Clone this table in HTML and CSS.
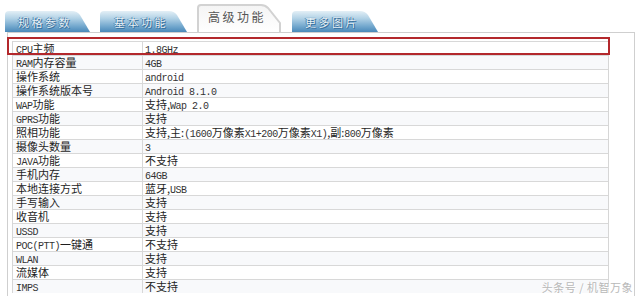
FILE: index.html
```html
<!DOCTYPE html>
<html lang="zh-CN">
<head>
<meta charset="utf-8">
<title>高级功能</title>
<link rel="stylesheet" href="styles.css">
</head>
<body>
<div class="page">
  <div class="tabs">
    <div class="tab tab-a">
      <svg class="tab-bg" width="85" height="22" viewBox="0 0 85 22"><defs><linearGradient id="g1" x1="0" y1="0" x2="0" y2="1"><stop offset="0" stop-color="#e3eff6"/><stop offset="0.35" stop-color="#b2d2e6"/><stop offset="0.75" stop-color="#6fa5cc"/><stop offset="1" stop-color="#4a89b9"/></linearGradient></defs><path d="M0,22 V5 Q0,1 4,1 H67 Q72,1 75,5 L85,22 Z" fill="url(#g1)"/></svg>
      <span class="tab-label">规格参数</span>
    </div>
    <div class="tab tab-b">
      <svg class="tab-bg" width="87" height="22" viewBox="0 0 87 22"><path d="M0,22 V5 Q0,1 4,1 H69 Q74,1 77,5 L87,22 Z" fill="url(#g1)"/></svg>
      <span class="tab-label">基本功能</span>
    </div>
    <div class="tab tab-active">
      <svg class="tab-bg" width="85" height="28" viewBox="0 0 85 28"><defs><linearGradient id="g2" x1="0" y1="0" x2="0" y2="1"><stop offset="0" stop-color="#f4f4f4"/><stop offset="1" stop-color="#ffffff"/></linearGradient></defs><path d="M1,28 V4 Q1,1 4,1 H64 Q68,1 71,4 L83,19 V28" fill="url(#g2)" stroke="#d2d2d2" stroke-width="2"/></svg>
      <span class="tab-label">高级功能</span>
    </div>
    <div class="tab tab-d">
      <svg class="tab-bg" width="86" height="22" viewBox="0 0 86 22"><path d="M0,22 V5 Q0,1 4,1 H68 Q73,1 76,5 L86,22 Z" fill="url(#g1)"/></svg>
      <span class="tab-label">更多图片</span>
    </div>
  </div>
  <div class="panel">
    <div class="spec">
      <div class="row"><div class="k"><span class="en">CPU</span>主频</div><div class="v"><span class="en">1.8GHz</span></div></div>
      <div class="row"><div class="k"><span class="en">RAM</span>内存容量</div><div class="v"><span class="en">4GB</span></div></div>
      <div class="row"><div class="k">操作系统</div><div class="v"><span class="en">android</span></div></div>
      <div class="row"><div class="k">操作系统版本号</div><div class="v"><span class="en">Android 8.1.0</span></div></div>
      <div class="row"><div class="k"><span class="en">WAP</span>功能</div><div class="v">支持,<span class="en">Wap 2.0</span></div></div>
      <div class="row"><div class="k"><span class="en">GPRS</span>功能</div><div class="v">支持</div></div>
      <div class="row"><div class="k">照相功能</div><div class="v">支持,主:<span class="en">(1600</span>万像素<span class="en">X1+200</span>万像素<span class="en">X1)</span>,副:<span class="en">800</span>万像素</div></div>
      <div class="row"><div class="k">摄像头数量</div><div class="v"><span class="en">3</span></div></div>
      <div class="row"><div class="k"><span class="en">JAVA</span>功能</div><div class="v">不支持</div></div>
      <div class="row"><div class="k">手机内存</div><div class="v"><span class="en">64GB</span></div></div>
      <div class="row"><div class="k">本地连接方式</div><div class="v">蓝牙,<span class="en">USB</span></div></div>
      <div class="row"><div class="k">手写输入</div><div class="v">支持</div></div>
      <div class="row"><div class="k">收音机</div><div class="v">支持</div></div>
      <div class="row"><div class="k"><span class="en">USSD</span></div><div class="v">支持</div></div>
      <div class="row"><div class="k"><span class="en">POC(PTT)</span>一键通</div><div class="v">不支持</div></div>
      <div class="row"><div class="k"><span class="en">WLAN</span></div><div class="v">支持</div></div>
      <div class="row"><div class="k">流媒体</div><div class="v">支持</div></div>
      <div class="row"><div class="k"><span class="en">IMPS</span></div><div class="v">不支持</div></div>
    </div>
  </div>
  <div class="highlight"></div>
  <div class="watermark">头条号 / 机智万象</div>
</div>
</body>
</html>
```
FILE: styles.css
```css
html, body {
  margin: 0;
  padding: 0;
  background: #ffffff;
}
body {
  width: 640px;
  height: 296px;
  overflow: hidden;
  font-family: "Noto Sans CJK SC", "Liberation Sans", sans-serif;
  color: #222;
}
.page {
  position: relative;
  width: 640px;
  height: 296px;
  overflow: hidden;
}
.tabs {
  display: flex;
  align-items: flex-end;
  gap: 10px;
  height: 32px;
  padding-left: 5px;
  box-sizing: border-box;
}
.tab {
  display: grid;
  align-items: center;
}
.tab > * {
  grid-area: 1 / 1;
}
.tab-bg {
  display: block;
}
.tab-label {
  font-size: 11px;
  line-height: 12px;
  letter-spacing: 2.5px;
  color: #e9f3f9;
  padding-left: 13px;
  padding-top: 2px;
  text-shadow: 0 0 1px #1f5a88, 1px 1px 0 #3a72a0, -1px 0 0 #5b8fb9;
}
.tab-a { width: 85px; }
.tab-b { width: 87px; }
.tab-d { width: 86px; }
.tab-b .tab-label { padding-left: 14px; }
.tab-d .tab-label { padding-left: 13px; }
.tab-active {
  width: 85px;
}
.tab-active .tab-label {
  color: #555;
  font-size: 12px;
  letter-spacing: 2.5px;
  text-shadow: none;
  padding-left: 11px;
  padding-top: 0;
  align-self: start;
  margin-top: 7px;
}
.panel {
  margin-left: 7px;
  width: 628px;
  height: 264px;
  box-sizing: border-box;
  border: 1px solid #cfcfcf;
  border-bottom: none;
  padding: 8px 0 0 4px;
}
.spec {
  width: 597px;
  box-sizing: border-box;
  border-left: 1px solid #d6d6d6;
  border-right: 1px solid #d6d6d6;
}
.row {
  display: grid;
  grid-template-columns: 130px 1fr;
  height: 14px;
  box-sizing: border-box;
  border-top: 1px solid #d8d8d8;
}
.row:nth-child(even) {
  background: #f8f9fb;
}
.k, .v {
  height: 13px;
  font-size: 11px;
  line-height: 13px;
  white-space: nowrap;
  color: #1e1e1e;
}
.k {
  padding-left: 3px;
  border-right: 1px solid #d8d8d8;
}
.v {
  padding-left: 2px;
}
.en {
  font-family: "Liberation Mono", "DejaVu Sans Mono", monospace;
  font-size: 10px;
  line-height: 10px;
  letter-spacing: -0.5px;
  color: #333;
}
.highlight {
  position: absolute;
  left: 7px;
  top: 37px;
  width: 603px;
  height: 18px;
  box-sizing: border-box;
  border: 2px solid #b3282c;
}
.watermark {
  position: absolute;
  right: 7px;
  top: 281px;
  font-size: 11px;
  line-height: 13px;
  color: #b8b8b8;
  letter-spacing: 0.5px;
  text-shadow: 0 0 2px #fff, 1px 1px 0 #fff;
}
```
